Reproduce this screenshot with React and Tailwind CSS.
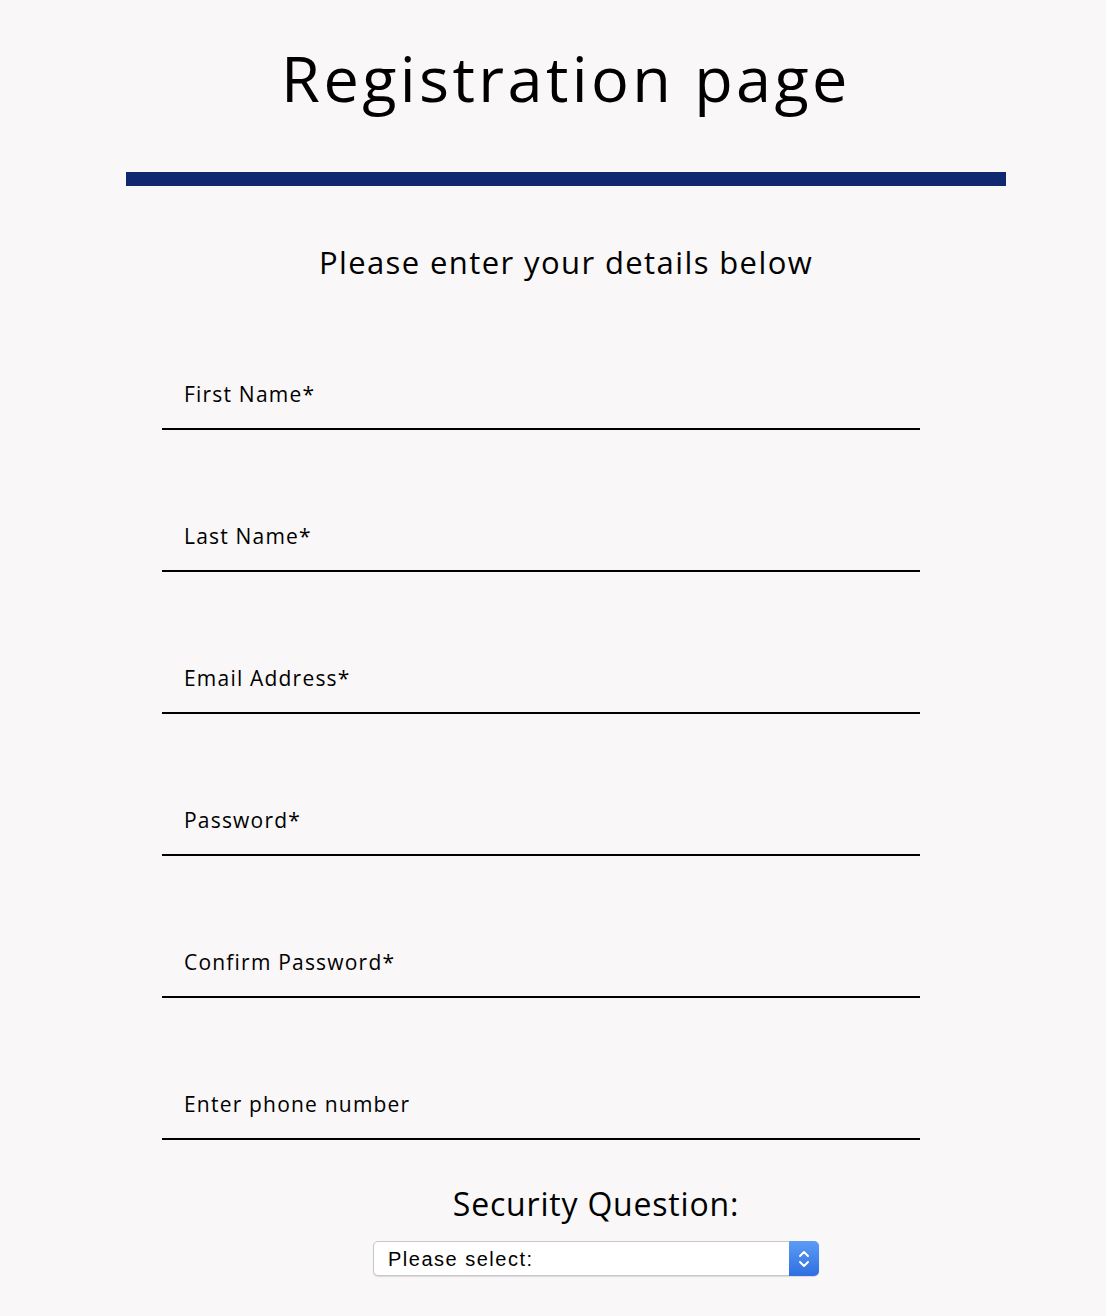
const fields = [
  'First Name*',
  'Last Name*',
  'Email Address*',
  'Password*',
  'Confirm Password*',
  'Enter phone number',
];

const Field = ({ label }) => (
  <div className="mt-[94px] first:mt-[100px] w-[758px] border-b-2 border-black pb-[22px] pl-[22px]">
    <p className="text-[21px] leading-[24px] tracking-[1.2px] text-black">{label}</p>
  </div>
);

export default function App() {
  return (
    <div
      className="min-h-screen bg-[#f9f7f8] pb-[40px] text-black"
      style={{ fontFamily: '"Open Sans", "Noto Sans", sans-serif' }}
    >
      <div className="ml-[126px] w-[880px]">
        <h1 className="pt-[38px] text-center text-[63px] leading-[80px] font-normal tracking-[3.4px]">
          Registration page
        </h1>
        <div className="mt-[54px] h-[14px] w-[880px] bg-[#0f2870]" />
        <h2 className="mt-[56px] text-center text-[31px] leading-[40px] font-normal tracking-[1.4px]">
          Please enter your details below
        </h2>
      </div>
      <div className="ml-[162px] flex flex-col">
        {fields.map((f) => (
          <Field key={f} label={f} />
        ))}
      </div>
      <div className="ml-[162px] w-[868px]">
        <h3 className="mt-[44px] text-center text-[32px] leading-[40px] font-normal tracking-[0.8px]">
          Security Question:
        </h3>
        <div className="mx-auto mt-[17px] flex h-[35px] w-[446px] items-center rounded-[5px] border border-[#c8c8c8] bg-white shadow-[0_1px_1px_rgba(0,0,0,0.12)]">
          <span
            className="flex-1 pl-[14px] text-[20px] tracking-[1.5px]"
            style={{ fontFamily: '"Liberation Sans", Arial, sans-serif' }}
          >
            Please select:
          </span>
          <div className="flex h-[35px] w-[30px] -mr-px -my-px items-center justify-center rounded-r-[5px] bg-gradient-to-b from-[#5d9cf5] to-[#2f6ee0]">
            <svg width="14" height="22" viewBox="0 0 14 22" fill="none" stroke="white" strokeWidth="2" strokeLinecap="round" strokeLinejoin="round">
              <path d="M3 8l4-4 4 4" />
              <path d="M3 14l4 4 4-4" />
            </svg>
          </div>
        </div>
      </div>
    </div>
  );
}
